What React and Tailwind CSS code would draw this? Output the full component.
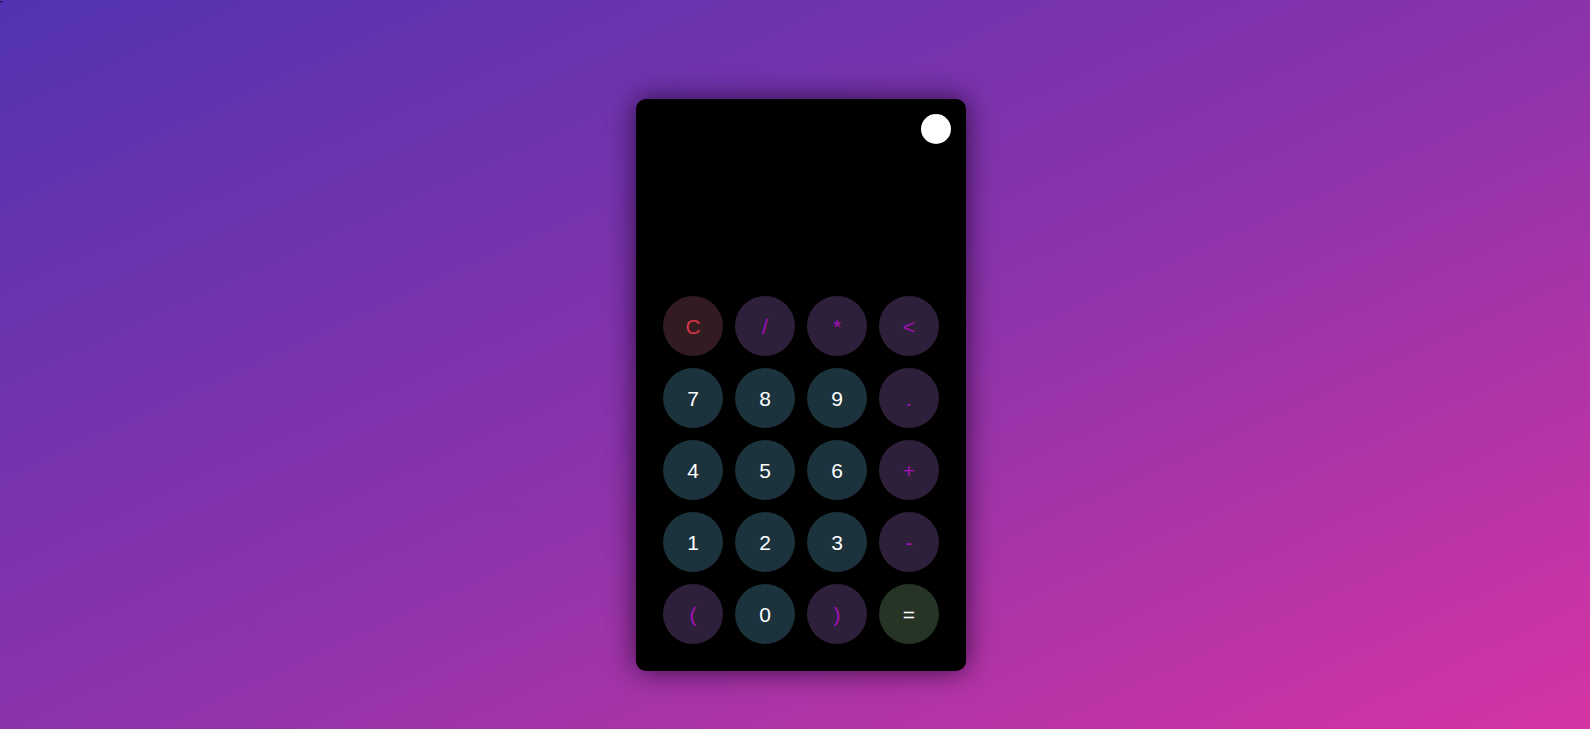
import React, { useState } from "react";

const KEYS = [
  { label: "C", kind: "clear" },
  { label: "/", kind: "op" },
  { label: "*", kind: "op" },
  { label: "<", kind: "op" },
  { label: "7", kind: "num" },
  { label: "8", kind: "num" },
  { label: "9", kind: "num" },
  { label: ".", kind: "op" },
  { label: "4", kind: "num" },
  { label: "5", kind: "num" },
  { label: "6", kind: "num" },
  { label: "+", kind: "op" },
  { label: "1", kind: "num" },
  { label: "2", kind: "num" },
  { label: "3", kind: "num" },
  { label: "-", kind: "op" },
  { label: "(", kind: "op" },
  { label: "0", kind: "num" },
  { label: ")", kind: "op" },
  { label: "=", kind: "eq" },
];

const STYLES = {
  clear: "bg-[#321c21] text-[#dc3545]",
  op: "bg-[#2e1f3a] text-[#a50fb8]",
  num: "bg-[#1c323c] text-white",
  eq: "bg-[#253424] text-white",
};

const App = () => {
  const [expr, setExpr] = useState("");

  const press = (key) => {
    if (key.label === "C") return setExpr("");
    if (key.label === "<") return setExpr((prev) => prev.slice(0, -1));
    if (key.label === "=") {
      try {
        // eslint-disable-next-line no-new-func
        const result = Function(`"use strict"; return (${expr || 0})`)();
        setExpr(String(result));
      } catch (err) {
        setExpr("Error");
      }
      return;
    }
    setExpr((prev) => prev + key.label);
  };

  return (
    <div className="relative min-h-screen w-full bg-[linear-gradient(to_bottom_right,#5233b1,#8a33ab_50%,#d534a4)] flex justify-center pl-[12px] pt-[99px] font-['Liberation_Sans',Arial,sans-serif]">
      <span className="absolute left-0 top-0 text-[8px] leading-none text-black">"</span>

      <div className="w-[330px] h-[572px] rounded-[10px] bg-black flex flex-col p-[15px] shadow-[0_0_28px_rgba(20,0,30,0.75)]">
        {/* Header */}
        <div className="flex justify-end">
          <button className="w-[30px] h-[30px] rounded-full bg-white" aria-label="Tema" />
        </div>

        {/* Display */}
        <div className="flex-1 flex items-end justify-end px-3 pb-4 text-white text-4xl overflow-hidden">
          {expr}
        </div>

        {/* Keys */}
        <div className="grid grid-cols-4 gap-3 px-3 pb-[12px]">
          {KEYS.map((key) => (
            <button
              key={key.label}
              onClick={() => press(key)}
              className={`w-[60px] h-[60px] rounded-full grid place-items-center text-[21px] leading-none ${STYLES[key.kind]}`}
            >
              {key.label}
            </button>
          ))}
        </div>
      </div>
    </div>
  );
};

export default App;
